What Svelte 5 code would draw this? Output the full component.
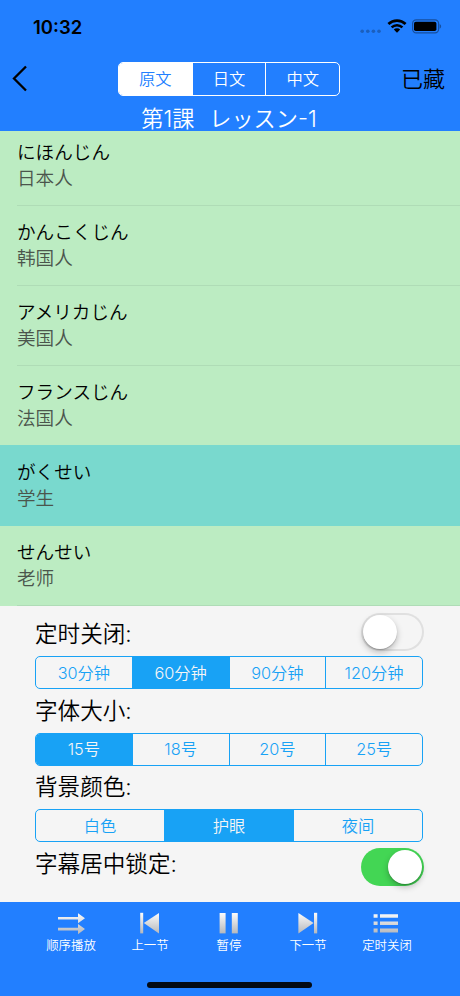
<script>
  let view = $state("原文");
  let activeRow = $state(4);
  let timerOn = $state(false);
  let lockOn = $state(true);

  let settings = $state([
    { label: "定时关闭:", options: ["30分钟", "60分钟", "90分钟", "120分钟"], value: "60分钟" },
    { label: "字体大小:", options: ["15号", "18号", "20号", "25号"], value: "15号" },
    { label: "背景颜色:", options: ["白色", "护眼", "夜间"], value: "护眼" }
  ]);

  const words = [
    { ja: "にほんじん", zh: "日本人" },
    { ja: "かんこくじん", zh: "韩国人" },
    { ja: "アメリカじん", zh: "美国人" },
    { ja: "フランスじん", zh: "法国人" },
    { ja: "がくせい", zh: "学生" },
    { ja: "せんせい", zh: "老师" }
  ];

  const controls = [
    { icon: "order", label: "顺序播放" },
    { icon: "prev", label: "上一节" },
    { icon: "pause", label: "暂停" },
    { icon: "next", label: "下一节" },
    { icon: "list", label: "定时关闭" }
  ];
</script>

<main class="app">
  <header>
    <div class="status">
      <span class="time">10:32</span>
      <div class="indicators">
        <svg class="dots" width="22" height="20" viewBox="0 0 22 20">
          <circle cx="2.2" cy="14.2" r="1.8" />
          <circle cx="7.8" cy="14.2" r="1.8" />
          <circle cx="13.4" cy="14.2" r="1.8" />
          <circle cx="19" cy="14.2" r="1.8" />
        </svg>
        <svg class="wifi" width="20" height="20" viewBox="0 0 20 20">
          <path d="M1.4 7a12.4 12.4 0 0 1 17.2 0" stroke-width="2.7" />
          <path d="M4.6 10.4a7.8 7.8 0 0 1 10.8 0" stroke-width="2.5" />
          <path class="solid" d="M6.8 12.5a4.6 4.6 0 0 1 6.4 0L10 15.8z" />
        </svg>
        <svg class="battery" width="30" height="20" viewBox="0 0 30 20">
          <rect class="shell" x="0.6" y="2.9" width="26" height="13" rx="3.6" />
          <rect x="2" y="4.7" width="22.4" height="9.4" rx="1.8" />
          <path class="tip" d="M27.6 7.1c2 .8 2 3.8 0 4.6z" />
        </svg>
      </div>
    </div>

    <div class="nav">
      <button class="back" aria-label="返回">
        <svg width="16" height="27" viewBox="0 0 16 27">
          <path d="M14 1.5L2 13.5L14 25.5" />
        </svg>
      </button>
      <div class="segment light">
        {#each ["原文", "日文", "中文"] as name}
          <button class:on={view === name} onclick={() => (view = name)}>{name}</button>
        {/each}
      </div>
      <button class="saved">已藏</button>
    </div>

    <h1>第1課&nbsp; レッスン-1</h1>
  </header>

  <ul class="words">
    {#each words as word, i}
      <li>
        <button
          class="word"
          class:active={i === activeRow}
          class:above={i === activeRow - 1}
          onclick={() => (activeRow = i)}
        >
          <span class="ja">{word.ja}</span>
          <span class="zh">{word.zh}</span>
        </button>
      </li>
    {/each}
  </ul>

  <section class="panel">
    {#each settings as item, i}
      <div class="row" class:first={i === 0}>
        <span>{item.label}</span>
        {#if i === 0}
          <button class="switch" class:on={timerOn} aria-label="定时关闭" onclick={() => (timerOn = !timerOn)}>
            <i></i>
          </button>
        {/if}
      </div>
      <div class="segment">
        {#each item.options as option}
          <button class:on={item.value === option} onclick={() => (item.value = option)}>{option}</button>
        {/each}
      </div>
    {/each}
    <div class="row last">
      <span>字幕居中锁定:</span>
      <button class="switch" class:on={lockOn} aria-label="字幕居中锁定" onclick={() => (lockOn = !lockOn)}>
        <i></i>
      </button>
    </div>
  </section>

  <footer>
    <div class="controls">
      {#each controls as control}
        <button class="control">
          <svg width="30" height="24" viewBox="0 0 30 24">
            <defs>
              <linearGradient id="metal" gradientUnits="userSpaceOnUse" x1="0" y1="1" x2="0" y2="23">
                <stop offset="0" stop-color="#fff" />
                <stop offset="1" stop-color="#b4b6ba" />
              </linearGradient>
            </defs>
            <g fill="url(#metal)">
              {#if control.icon === "order"}
                <path d="M2 6h20V2.2L29 7.3L22 12.2V8.6H2z" />
                <path d="M2 16.8h20V13L29 18.1L22 23.2V19.4H2z" />
              {:else if control.icon === "prev"}
                <path d="M5.2 1.8h3v20.6h-3z" />
                <path d="M24 2v20.4L8.8 12.1z" />
              {:else if control.icon === "pause"}
                <path d="M5.6 2h6v20.4h-6z" />
                <path d="M17.8 2h6v20.4h-6z" />
              {:else if control.icon === "next"}
                <path d="M5.4 2v20.4L20.6 12.1z" />
                <path d="M21 1.8h3.2v20.6H21z" />
              {:else}
                <path d="M1.6 3.2h4v3.6h-4zM8 3.2h18v3.6H8z" />
                <path d="M1.6 10.4h4V14h-4zM8 10.4h18V14H8z" />
                <path d="M1.6 17.6h4v3.8h-4zM8 17.6h18v3.8H8z" />
              {/if}
            </g>
          </svg>
          <span>{control.label}</span>
        </button>
      {/each}
    </div>
    <div class="home"></div>
  </footer>
</main>

<style>
  :global(body) {
    margin: 0;
    background: #227fff;
  }

  .app {
    width: 460px;
    height: 996px;
    display: flex;
    flex-direction: column;
    overflow: hidden;
    font-family: Inter, "Noto Sans CJK SC", sans-serif;
    font-weight: 350;
    color: #000;
  }

  button {
    margin: 0;
    padding: 0;
    border: 0;
    background: none;
    font: inherit;
    color: inherit;
    cursor: pointer;
  }

  svg {
    display: block;
  }

  header {
    height: 131px;
    flex: none;
    background: #227fff;
  }

  .status {
    display: flex;
    justify-content: space-between;
    align-items: center;
    height: 54px;
    padding: 0 18px 0 33px;
    box-sizing: border-box;
  }

  .time {
    font-size: 18.5px;
    font-weight: 600;
  }

  .indicators {
    display: flex;
    gap: 5px;
  }

  .dots {
    fill: #1b5fbd;
  }

  .wifi {
    fill: none;
    stroke: #000;
  }

  .wifi .solid {
    fill: #000;
    stroke: none;
  }

  .battery .shell {
    fill: none;
    stroke: #164f9f;
    stroke-width: 1.2;
  }

  .battery .tip {
    fill: #164f9f;
  }

  .nav {
    display: grid;
    grid-template-columns: 106px 222px 1fr;
    align-items: center;
    height: 50px;
    padding: 0 15px 0 12px;
  }

  .back {
    padding-bottom: 2px;
  }

  .back svg {
    fill: none;
    stroke: #000;
    stroke-width: 2.3;
  }

  .saved {
    justify-self: end;
    font-size: 22px;
    line-height: 34px;
  }

  .segment {
    display: flex;
    height: 33px;
    box-sizing: border-box;
    border: 1.5px solid #18a2f5;
    border-radius: 5px;
    overflow: hidden;
    font-size: 16.3px;
    color: #18a2f5;
  }

  .segment button {
    flex: 1 1 0;
    min-width: 0;
    box-sizing: border-box;
    line-height: 30px;
  }

  .segment button + button {
    border-left: 1px solid #18a2f5;
  }

  .segment .on {
    background: #18a2f5;
    color: #f5f5f5;
  }

  .segment.light {
    height: 34px;
    border-color: #fff;
    color: #fff;
  }

  .segment.light button + button {
    border-color: #fff;
  }

  .segment.light .on {
    background: #fff;
    color: #227fff;
  }

  h1 {
    margin: 0;
    padding-right: 2px;
    text-align: center;
    font-size: 22.2px;
    line-height: 29px;
    font-weight: 350;
    font-family: Inter, "Noto Sans CJK JP", sans-serif;
    word-spacing: 1.2px;
    color: #fff;
  }

  .words {
    flex: none;
    height: 475px;
    display: flex;
    flex-direction: column;
    justify-content: flex-end;
    margin: 0;
    padding: 0;
    overflow: hidden;
    list-style: none;
    background: #bcecc2;
  }

  .word {
    display: flex;
    flex-direction: column;
    justify-content: center;
    width: 100%;
    height: 80px;
    padding: 0 0 4px 17px;
    box-sizing: border-box;
    font-size: 18.6px;
    line-height: 26px;
    text-align: left;
    /* separator starts at the text edge, not at the screen edge */
    background: linear-gradient(#afdcb6, #afdcb6) 17px 100% / 100% 1px no-repeat;
  }

  .word.active {
    background: #79d9ce;
  }

  /* the highlight swallows the separator above it */
  .word.above {
    background: linear-gradient(#79d9ce, #79d9ce) 0 100% / 100% 1px no-repeat;
  }

  .ja {
    font-family: "Noto Sans CJK JP", sans-serif;
  }

  .zh {
    margin: 1px 0 -1px;
    color: #4b554c;
  }

  .panel {
    flex: none;
    height: 296px;
    padding: 0 37px 0 35px;
    box-sizing: border-box;
    background: #f5f5f5;
  }

  .row {
    display: flex;
    align-items: center;
    justify-content: space-between;
    height: 43.5px;
    font-size: 22.6px;
    line-height: 30px;
  }

  .row.first {
    height: 50px;
    padding-top: 6px;
    box-sizing: border-box;
  }

  .row.last .switch {
    margin-top: 7px;
  }

  .switch {
    width: 63px;
    height: 38px;
    margin: -4px -1px 0 0;
    padding: 2px;
    box-sizing: border-box;
    border-radius: 19px;
    box-shadow: inset 0 0 0 2px #e0e0e0;
  }

  .switch i {
    display: block;
    width: 34px;
    height: 34px;
    border-radius: 50%;
    background: #fff;
    box-shadow: 0 3px 6px rgba(0, 0, 0, 0.25), 0 1px 1px rgba(0, 0, 0, 0.2);
  }

  .switch.on {
    background: #43d654;
    box-shadow: none;
  }

  .switch.on i {
    margin-left: 25px;
  }

  footer {
    flex: 1;
    display: flex;
    flex-direction: column;
    align-items: center;
    justify-content: space-between;
    padding-right: 2px;
    background: #227fff;
  }

  .controls {
    display: grid;
    grid-template-columns: repeat(5, 79px);
    padding-top: 9px;
  }

  .control {
    display: flex;
    flex-direction: column;
    align-items: center;
    font-size: 12.4px;
    line-height: 22px;
    color: #fff;
  }

  .home {
    width: 165px;
    height: 6px;
    margin-bottom: 8px;
    border-radius: 3px;
    background: #030a14;
  }
</style>
